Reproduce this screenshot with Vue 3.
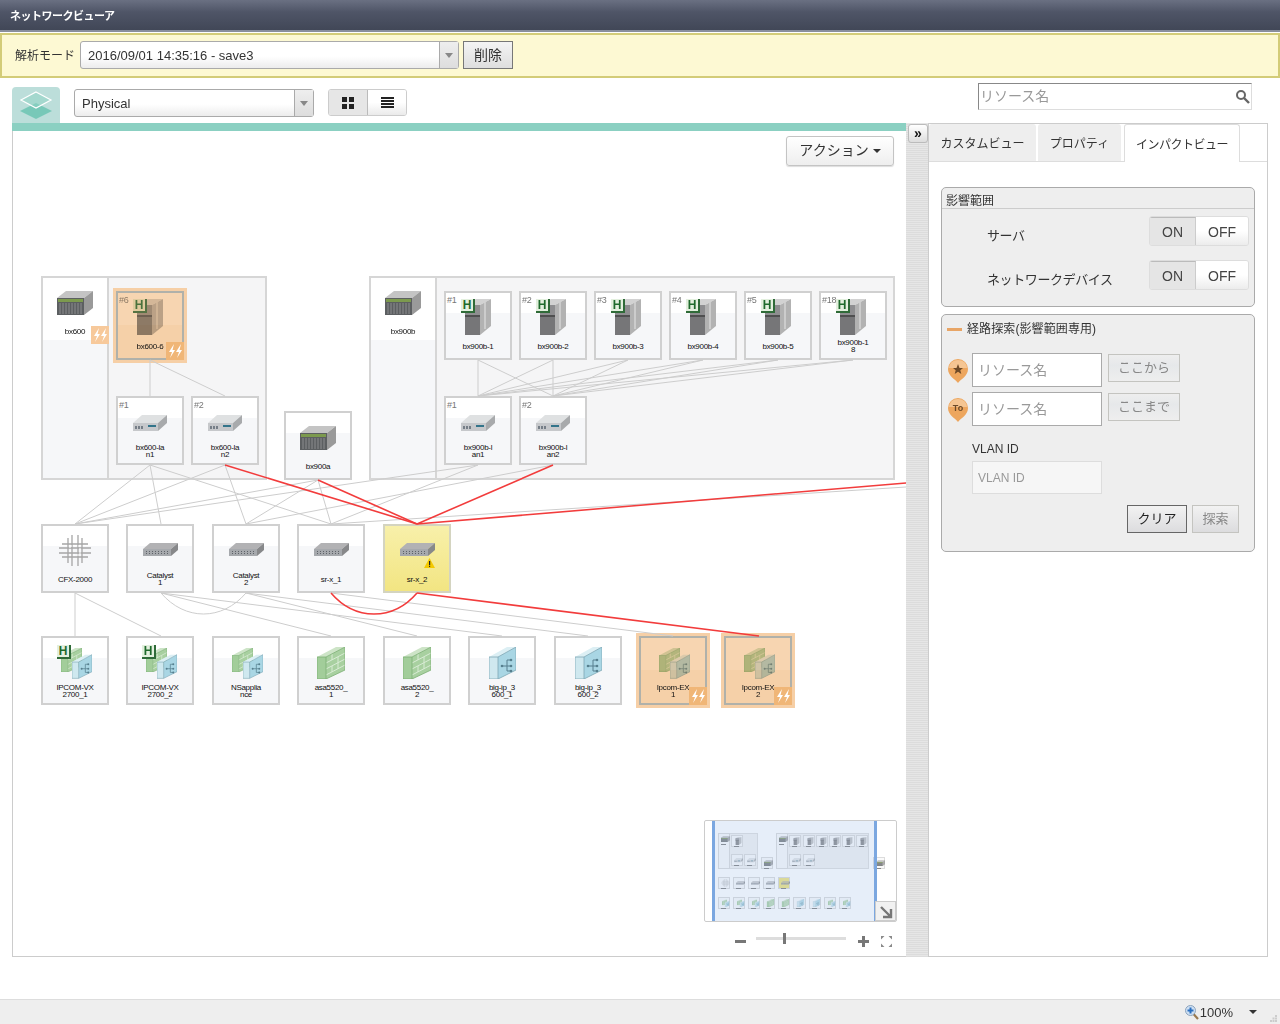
<template>
  <div class="page">
    <svg class="sprite" aria-hidden="true">
      <symbol id="chassis" viewBox="0 0 36 24">
        <polygon points="0,7 9,0 36,0 27,7" fill="#c4c4c4" />
        <polygon points="27,7 36,0 36,17 27,24" fill="#9a9a9a" />
        <rect x="0" y="7" width="27" height="17" fill="#5c5f61" />
        <rect x="1" y="8" width="25" height="3" fill="#7c9a4e" />
        <path d="M3 12v11M6 12v11M9 12v11M12 12v11M15 12v11M18 12v11M21 12v11M24 12v11" stroke="#8b8d8f" stroke-width="1" />
      </symbol>
      <symbol id="tower" viewBox="0 0 26 36">
        <polygon points="0,6 11,0 26,0 15,6" fill="#d2d2d2" />
        <polygon points="15,6 26,0 26,27 15,36" fill="#b2b2b2" />
        <path d="M20 3v27" stroke="#d4d4d4" stroke-width="1.500" />
        <rect x="0" y="6" width="15" height="30" fill="#767678" />
        <rect x="0" y="6" width="15" height="10" fill="#8e8e90" />
        <rect x="0" y="16" width="15" height="2" fill="#4f4f50" />
      </symbol>
      <symbol id="hub" viewBox="0 0 34 17">
        <polygon points="0,9 9,1 34,1 25,9" fill="#dfe1e2" />
        <polygon points="25,9 34,1 34,9 25,17" fill="#a8aaac" />
        <rect x="0" y="9" width="25" height="8" fill="#c6c8cb" />
        <path d="M3 12v3M6 12v3M9 12v3" stroke="#55606b" stroke-width="1.400" />
        <rect x="15" y="11" width="8" height="2" fill="#33748a" />
      </symbol>
      <symbol id="switch" viewBox="0 0 35 13">
        <polygon points="0,6 7,0 35,0 28,6" fill="#b2b2b4" />
        <polygon points="28,6 35,0 35,7 28,13" fill="#87888a" />
        <rect x="0" y="6" width="28" height="7" fill="#a6a9ad" />
        <path d="M3 8.500h22M3 10.500h22" stroke="#5e6268" stroke-width="1" stroke-dasharray="1 2" />
      </symbol>
      <symbol id="fabric" viewBox="0 0 32 31">
        <path d="M9 3v25M13 0v31M19 0v31M23 3v25M3 9h26M0 13h32M0 18h32M3 22h26" stroke="#a6a6a6" stroke-width="1.300" fill="none" />
        <path d="M11 11h10v9h-10z" fill="none" stroke="#fff" stroke-width="1" stroke-dasharray="2 2" />
      </symbol>
      <symbol id="fw" viewBox="0 0 28 32">
        <polygon points="0,10 19,0 28,0 9,10" fill="#cde4c7" />
        <rect x="0" y="10" width="9" height="22" fill="#a2cd9a" />
        <polygon points="9,10 28,0 28,23 9,32" fill="#a8d0a0" />
        <path d="M9 16 28 6M9 22 28 12M9 28 28 18M15 7v6M21 10v6M15 19v6M21 16v6" stroke="#d8ebd4" stroke-width="1" fill="none" />
        <path d="M0 10h9v22h-9zM9 10 28 0v23L9 32" fill="none" stroke="#7bae74" stroke-width=".8" />
      </symbol>
      <symbol id="lb" viewBox="0 0 27 32">
        <polygon points="0,10 18,0 27,0 9,10" fill="#dceff4" />
        <rect x="0" y="10" width="9" height="22" fill="#cfe8ef" />
        <polygon points="9,10 27,0 27,23 9,32" fill="#a9d6e4" />
        <path d="M0 10h9v22h-9zM9 10 27 0v23L9 32" fill="none" stroke="#7ea6b4" stroke-width=".8" />
        <path d="M13 19h5M18 19v-6M18 13h4M18 19h4M18 19v5M18 24h4" stroke="#567f8e" stroke-width="1" fill="none" />
        <circle cx="13" cy="19" r="1.300" fill="#567f8e" />
        <circle cx="22" cy="13" r="1.300" fill="#567f8e" />
        <circle cx="22" cy="19" r="1.300" fill="#567f8e" />
        <circle cx="22" cy="24" r="1.300" fill="#567f8e" />
      </symbol>
      <symbol id="combo" viewBox="0 0 33 33">
        <use href="#fw" x="2" y="2" width="21" height="24" />
        <use href="#lb" x="13" y="8" width="20" height="25" />
      </symbol>
      <symbol id="bolts" viewBox="0 0 18 18">
        <path d="M8 2 3 10h3l-2 6 5-8H6.500zM15 2l-5 8h3l-2 6 5-8h-2.500z" fill="#fff" />
      </symbol>
      <symbol id="warn" viewBox="0 0 11 10">
        <polygon points="5.500,0 11,10 0,10" fill="#f4c900" />
        <rect x="5" y="3" width="1.200" height="4" fill="#222" />
        <rect x="5" y="7.700" width="1.200" height="1.200" fill="#222" />
      </symbol>
    </svg>

    <header class="title-bar">ネットワークビューア</header>

    <div class="mode-bar">
      <span class="mode-label">解析モード</span>
      <div class="select date-select">
        <span class="select-value">2016/09/01 14:35:16 - save3</span>
        <span class="select-arrow"></span>
      </div>
      <button class="delete-button">削除</button>
    </div>

    <div class="tool-row">
      <div class="layer-tab">
        <svg width="34" height="28" viewBox="0 0 34 28">
          <polygon points="17,12 33,20 17,28 1,20" fill="#78c8b8" />
          <polygon points="17,1 32,9 17,17 2,9" fill="#8fd3c5" fill-opacity=".55" stroke="#fff" stroke-width="1.200" />
        </svg>
      </div>
      <div class="select layer-select">
        <span class="select-value">Physical</span>
        <span class="select-arrow"></span>
      </div>
      <div class="view-toggle">
        <button class="view-btn pressed">
          <svg width="12" height="12" viewBox="0 0 12 12"><path d="M0 0h5v5H0zM7 0h5v5H7zM0 7h5v5H0zM7 7h5v5H7z" fill="#222" /></svg>
        </button>
        <button class="view-btn">
          <svg width="13" height="11" viewBox="0 0 13 11"><path d="M0 0h13v2H0zM0 3h13v2H0zM0 6h13v2H0zM0 9h13v2H0z" fill="#222" /></svg>
        </button>
      </div>
      <div class="search-box">
        <span class="search-text">リソース名</span>
        <svg width="15" height="15" viewBox="0 0 15 15">
          <circle cx="6" cy="6" r="4" fill="none" stroke="#666" stroke-width="2" />
          <path d="M9 9l5 5" stroke="#666" stroke-width="2.400" />
        </svg>
      </div>
    </div>

    <div class="main">
      <section class="map-column">
        <div class="teal-bar"></div>
        <div class="canvas">
          <button class="action-button">アクション<span class="caret"></span></button>

          <div v-for="g in groups" :key="g.x" class="group" :style="boxStyle(g)"></div>

          <div
            v-for="n in nodes"
            :key="n.label"
            class="node"
            :class="{ head: n.head, alert: n.alert, warning: n.warning }"
            :style="nodeStyle(n)"
          >
            <span v-if="n.slot" class="slot">{{ n.slot }}</span>
            <div class="art">
              <svg :class="'icon-' + n.icon"><use :href="'#' + n.icon" /></svg>
              <span v-if="n.h" class="h-badge" :class="'h-' + n.icon">H</span>
            </div>
            <div class="label">{{ n.label }}</div>
            <svg v-if="n.warning" class="warn"><use href="#warn" /></svg>
            <span v-if="n.alert || n.flash" class="flash"><svg width="18" height="18"><use href="#bolts" /></svg></span>
          </div>

          <svg class="links" width="894" height="826">
            <g transform="translate(-13 -131)" fill="none">
              <path v-for="(l, i) in greyLinks" :key="i" :d="linePath(l)" stroke="#cdcdcd" />
              <path d="M161 593C185 621 222 621 246 593" stroke="#cdcdcd" />
              <path v-for="(l, i) in redLinks" :key="'r' + i" :d="linePath(l)" stroke="#f23c3c" stroke-width="1.600" />
              <path d="M331 593C355 621 393 621 417 593" stroke="#f23c3c" stroke-width="1.600" />
            </g>
          </svg>

          <div class="minimap">
            <div v-for="g in groups" :key="'m' + g.x" class="mini-group" :style="miniStyle(g.x, g.y, g.w, g.h)"></div>
            <div
              v-for="n in miniNodes"
              :key="'m' + n.label"
              class="mini-node"
              :class="{ warning: n.warning }"
              :style="miniStyle(n.x, n.y, 68, n.head ? 204 : 68)"
            >
              <svg width="9" height="8"><use :href="'#' + n.icon" /></svg>
              <i></i>
            </div>
            <div class="mini-view"></div>
            <div class="mini-resize">
              <svg width="14" height="14" viewBox="0 0 14 14"><path d="M1 1l10 10M11 3v8H3" fill="none" stroke="#777" stroke-width="2.400" /></svg>
            </div>
          </div>

          <div class="zoom-bar">
            <span class="zoom-minus"></span>
            <div class="zoom-track"><span class="zoom-thumb"></span></div>
            <svg width="11" height="11" viewBox="0 0 11 11"><path d="M0 4h11v3H0zM4 0h3v11H4z" fill="#777" /></svg>
            <svg width="11" height="11" viewBox="0 0 11 11"><path d="M0 0h3.500L0 3.500zM11 0v3.500L7.500 0zM0 11V7.500L3.500 11zM11 11H7.500L11 7.500z" fill="#8a8a8a" /></svg>
          </div>
        </div>
      </section>

      <div class="collapser">
        <button class="collapse-btn">»</button>
      </div>

      <aside class="side">
        <nav class="tabs">
          <span class="tab tab-custom">カスタムビュー</span>
          <span class="tab tab-prop">プロパティ</span>
          <span class="tab tab-impact active">インパクトビュー</span>
        </nav>
        <div class="side-body">
          <div class="panel scope-panel">
            <div class="panel-head">影響範囲</div>
            <div v-for="row in scopeRows" :key="row" class="scope-row">
              <span class="scope-name">{{ row }}</span>
              <div class="switch-toggle">
                <span class="on">ON</span>
                <span class="off">OFF</span>
              </div>
            </div>
          </div>

          <div class="panel route-panel">
            <div class="route-title"><i class="dash"></i>経路探索(影響範囲専用)</div>
            <div class="route-row">
              <svg class="pin" width="22" height="26" viewBox="0 0 22 26">
                <path d="M11 25C8 21 1 18 1 11a10 10 0 0 1 20 0c0 7-7 10-10 14z" fill="#eda65e" />
                <path d="M11 2a9 8 0 0 1 9 8H2a9 8 0 0 1 9-8z" fill="#f5c592" />
                <polygon points="11,6 12.500,10 16,10 13.300,12.300 14.300,16 11,13.800 7.700,16 8.700,12.300 6,10 9.500,10" fill="#6d4a28" />
              </svg>
              <div class="field">リソース名</div>
              <button class="route-btn">ここから</button>
            </div>
            <div class="route-row">
              <svg class="pin" width="22" height="26" viewBox="0 0 22 26">
                <path d="M11 25C8 21 1 18 1 11a10 10 0 0 1 20 0c0 7-7 10-10 14z" fill="#eda65e" />
                <path d="M11 2a9 8 0 0 1 9 8H2a9 8 0 0 1 9-8z" fill="#f5c592" />
                <text x="11" y="14" text-anchor="middle" class="pin-text">To</text>
              </svg>
              <div class="field">リソース名</div>
              <button class="route-btn">ここまで</button>
            </div>
            <div class="vlan-label">VLAN ID</div>
            <div class="field vlan-field">VLAN ID</div>
            <div class="route-actions">
              <button class="clear-btn">クリア</button>
              <button class="find-btn">探索</button>
            </div>
          </div>
        </div>
      </aside>
    </div>

    <footer class="status-bar">
      <svg width="14" height="15" viewBox="0 0 14 15">
        <path d="M8.500 9l4.500 5" stroke="#9a7a50" stroke-width="2.200" />
        <circle cx="5.500" cy="5.500" r="5" fill="#cfe0f3" stroke="#8ba3bd" />
        <path d="M2.500 4.500h6v2h-6zM4.500 2.500h2v6h-2z" fill="#2a6fc0" />
      </svg>
      <span class="zoom-value">100%</span>
      <span class="status-caret"></span>
      <svg class="grip" width="7" height="7" viewBox="0 0 7 7"><path d="M5 0h2v2H5zM2.500 2.500h2v2h-2zM5 2.500h2v2H5zM0 5h2v2H0zM2.500 5h2v2h-2zM5 5h2v2H5z" fill="#ccc" /></svg>
    </footer>
  </div>
</template>

<script setup>
const groups = [
  { x: 41, y: 276, w: 226, h: 204 },
  { x: 369, y: 276, w: 526, h: 204 },
]

const nodes = [
  { label: 'bx600', x: 41, y: 276, icon: 'chassis', head: true, flash: true },
  { label: 'bx900b', x: 369, y: 276, icon: 'chassis', head: true },
  { label: 'bx600-6', slot: '#6', x: 116, y: 291, icon: 'tower', h: true, alert: true },
  { label: 'bx900b-1', slot: '#1', x: 444, y: 291, icon: 'tower', h: true },
  { label: 'bx900b-2', slot: '#2', x: 519, y: 291, icon: 'tower', h: true },
  { label: 'bx900b-3', slot: '#3', x: 594, y: 291, icon: 'tower', h: true },
  { label: 'bx900b-4', slot: '#4', x: 669, y: 291, icon: 'tower', h: true },
  { label: 'bx900b-5', slot: '#5', x: 744, y: 291, icon: 'tower', h: true },
  { label: 'bx900b-1\n8', slot: '#18', x: 819, y: 291, icon: 'tower', h: true },
  { label: 'bx600-la\nn1', slot: '#1', x: 116, y: 396, icon: 'hub' },
  { label: 'bx600-la\nn2', slot: '#2', x: 191, y: 396, icon: 'hub' },
  { label: 'bx900b-l\nan1', slot: '#1', x: 444, y: 396, icon: 'hub' },
  { label: 'bx900b-l\nan2', slot: '#2', x: 519, y: 396, icon: 'hub' },
  { label: 'bx900a', x: 284, y: 411, icon: 'chassis' },
  { label: 'CFX-2000', x: 41, y: 524, icon: 'fabric' },
  { label: 'Catalyst\n1', x: 126, y: 524, icon: 'switch' },
  { label: 'Catalyst\n2', x: 212, y: 524, icon: 'switch' },
  { label: 'sr-x_1', x: 297, y: 524, icon: 'switch' },
  { label: 'sr-x_2', x: 383, y: 524, icon: 'switch', warning: true },
  { label: 'IPCOM-VX\n2700_1', x: 41, y: 636, icon: 'combo', h: true },
  { label: 'IPCOM-VX\n2700_2', x: 126, y: 636, icon: 'combo', h: true },
  { label: 'NSapplia\nnce', x: 212, y: 636, icon: 'combo' },
  { label: 'asa5520_\n1', x: 297, y: 636, icon: 'fw' },
  { label: 'asa5520_\n2', x: 383, y: 636, icon: 'fw' },
  { label: 'big-ip_3\n600_1', x: 468, y: 636, icon: 'lb' },
  { label: 'big-ip_3\n600_2', x: 554, y: 636, icon: 'lb' },
  { label: 'Ipcom-EX\n1', x: 639, y: 636, icon: 'combo', alert: true },
  { label: 'Ipcom-EX\n2', x: 724, y: 636, icon: 'combo', alert: true },
]

// the minimap also shows one node that is scrolled off the main canvas
const miniNodes = [...nodes, { label: 'offscreen', x: 916, y: 411, icon: 'chassis' }]

const bladeLinks = [478, 553, 628, 703, 778, 853].flatMap((x) => [
  [x, 360, 478, 396],
  [x, 360, 553, 396],
])

const greyLinks = [
  [150, 360, 150, 396],
  [150, 360, 225, 396],
  ...bladeLinks,
  [150, 465, 75, 524],
  [150, 465, 161, 524],
  [150, 465, 331, 524],
  [225, 465, 75, 524],
  [225, 465, 246, 524],
  [318, 480, 75, 524],
  [318, 480, 246, 524],
  [318, 480, 331, 524],
  [478, 465, 75, 524],
  [478, 465, 331, 524],
  [553, 465, 246, 524],
  [906, 487, 331, 524],
  [75, 593, 75, 636],
  [75, 593, 161, 636],
  [161, 593, 331, 636],
  [161, 593, 502, 636],
  [246, 593, 417, 636],
  [246, 593, 588, 636],
  [331, 593, 673, 636],
]

const redLinks = [
  [225, 465, 417, 524],
  [318, 480, 417, 524],
  [553, 465, 417, 524],
  [906, 483, 417, 524],
  [417, 593, 759, 636],
]

const scopeRows = ['サーバ', 'ネットワークデバイス']

// node data is in page coordinates, the canvas starts at 13,131
const boxStyle = (g) => ({
  left: g.x - 13 + 'px',
  top: g.y - 131 + 'px',
  width: g.w + 'px',
  height: g.h + 'px',
})

const nodeStyle = (n) => ({
  left: n.x - 13 + 'px',
  top: n.y - 131 + 'px',
})

const linePath = (l) => `M${l[0]} ${l[1]}L${l[2]} ${l[3]}`

const miniStyle = (x, y, w, h) => ({
  left: 5.4 + x * 0.1775 + 'px',
  top: -37.3 + y * 0.1775 + 'px',
  width: w * 0.1775 + 'px',
  height: h * 0.1775 + 'px',
})
</script>

<style scoped>
.page {
  width: 1280px;
  height: 1024px;
  display: flex;
  flex-direction: column;
  overflow: hidden;
  background: #fff;
  color: #333;
  font-family: "Liberation Sans", "Noto Sans CJK JP", sans-serif;
}
.sprite {
  position: absolute;
  width: 0;
  height: 0;
}
button {
  font-family: inherit;
  padding: 0;
  cursor: pointer;
}

.title-bar {
  height: 32px;
  flex: none;
  box-sizing: border-box;
  padding: 9px 0 0 10px;
  background: linear-gradient(#6a7082, #4f5567 40%, #414757);
  border-bottom: 2px solid #8a8f9c;
  color: #fff;
  font-size: 11px;
  font-weight: bold;
  letter-spacing: -0.5px;
  line-height: 15px;
}

.mode-bar {
  height: 45px;
  flex: none;
  margin-top: 1px;
  box-sizing: border-box;
  display: flex;
  align-items: center;
  padding: 0 0 2px 13px;
  background: #fdf9d3;
  border: 2px solid #d3cc78;
}
.mode-label {
  width: 65px;
  font-size: 12px;
}
.select {
  display: flex;
  box-sizing: border-box;
  height: 28px;
  background: linear-gradient(#fff 55%, #ececec);
  border: 1px solid #aaa;
  border-radius: 3px;
  font-size: 13px;
  color: #333;
}
.select-value {
  flex: 1;
  padding-left: 7px;
  line-height: 28px;
}
.select-arrow {
  width: 18px;
  border-left: 1px solid #aaa;
  position: relative;
  background: linear-gradient(#eee, #ddd);
}
.select-arrow::after {
  content: "";
  position: absolute;
  left: 5px;
  top: 11px;
  border: 4px solid transparent;
  border-top: 5px solid #888;
}
.date-select {
  width: 379px;
}
.delete-button {
  width: 50px;
  height: 28px;
  margin-left: 4px;
  padding-bottom: 2px;
  font-size: 14px;
  color: #333;
  background: linear-gradient(#f4f4f4, #dedede);
  border: 1px solid #777;
}

.tool-row {
  height: 45px;
  flex: none;
  position: relative;
  display: flex;
  align-items: flex-start;
}
.layer-tab {
  width: 48px;
  height: 36px;
  margin: 9px 0 0 12px;
  box-sizing: border-box;
  padding: 4px 0 0 7px;
  background: #bcdeda;
  border-radius: 4px 4px 0 0;
}
.layer-select {
  width: 240px;
  margin: 11px 0 0 14px;
}
.view-toggle {
  display: flex;
  margin: 11px 0 0 14px;
  width: 79px;
  height: 27px;
  border: 1px solid #ccc;
  border-radius: 3px;
  box-sizing: border-box;
  overflow: hidden;
}
.view-btn {
  flex: 1;
  border: 0;
  background: linear-gradient(#fff 50%, #eaeaea);
  display: flex;
  align-items: center;
  justify-content: center;
}
.view-btn.pressed {
  background: #e6e6e6;
  border-right: 1px solid #bbb;
}
.search-box {
  margin: 5px 0 0 571px;
  width: 274px;
  height: 27px;
  box-sizing: border-box;
  display: flex;
  align-items: center;
  justify-content: space-between;
  padding: 0 1px 0 2px;
  border: 1px solid #ddd;
  border-top: 1px solid #888;
  border-left: 1px solid #888;
  font-size: 14px;
  color: #999;
}
.search-text {
  margin: -3px 0 0 -1px;
}

.main {
  height: 834px;
  flex: none;
  display: flex;
  margin: 0 12px;
}
.map-column {
  width: 894px;
  display: flex;
  flex-direction: column;
}
.teal-bar {
  height: 8px;
  background: #8bd0c2;
}
.canvas {
  flex: 1;
  position: relative;
  overflow: hidden;
  border-left: 1px solid #ccc;
  border-bottom: 1px solid #ccc;
}
.action-button {
  position: absolute;
  left: 773px;
  top: 5px;
  width: 108px;
  height: 30px;
  padding-bottom: 4px;
  font-size: 14px;
  color: #333;
  background: linear-gradient(#fff, #eee);
  border: 1px solid #c4c4c4;
  border-radius: 3px;
  box-shadow: 0 1px 1px #ddd;
}
.caret {
  display: inline-block;
  margin-left: 4px;
  vertical-align: 2px;
  border: 4px solid transparent;
  border-top: 4px solid #333;
  border-bottom: 0;
}

.group {
  position: absolute;
  box-sizing: border-box;
  background: #f5f5f6;
  border: 2px solid #d6d6d6;
}
.links {
  position: absolute;
  left: 0;
  top: 0;
  pointer-events: none;
}
.node {
  position: absolute;
  width: 68px;
  height: 69px;
  box-sizing: border-box;
  display: flex;
  flex-direction: column;
  background: linear-gradient(#fff 20px, #f6f7f9 20px);
  border: 2px solid #d0d0d0;
}
.node.head {
  height: 204px;
  background: linear-gradient(#fff 62px, #f6f7f9 62px);
  border-color: #d6d6d6;
}
.node.alert {
  background: linear-gradient(#f7d5b1 32px, #f5d0a8 32px);
  border-color: #b0b1aa;
  box-shadow: 0 0 0 3px #f6cfa6;
}
.node.warning {
  background: linear-gradient(#f8f0aa, #f2e582);
  border-color: #d4d4c0;
}
.slot {
  position: absolute;
  left: 1px;
  top: 0;
  font-size: 9px;
  line-height: 14px;
  color: #777;
  letter-spacing: -0.3px;
}
.art {
  position: relative;
  height: 46px;
  flex: none;
  display: flex;
  justify-content: center;
}
.alert .art,
.alert .slot {
  opacity: 0.8;
  mix-blend-mode: multiply;
}
.icon-chassis {
  width: 36px;
  height: 24px;
  margin-top: 13px;
}
.icon-tower {
  width: 26px;
  height: 36px;
  margin-top: 6px;
}
.icon-hub {
  width: 34px;
  height: 17px;
  margin-top: 16px;
}
.icon-switch {
  width: 35px;
  height: 13px;
  margin-top: 17px;
}
.icon-fabric {
  width: 32px;
  height: 31px;
  margin-top: 9px;
}
.icon-combo {
  width: 33px;
  height: 33px;
  margin-top: 8px;
}
.icon-fw {
  width: 28px;
  height: 32px;
  margin-top: 9px;
}
.icon-lb {
  width: 27px;
  height: 32px;
  margin-top: 9px;
}
.h-badge {
  position: absolute;
  width: 14px;
  height: 14px;
  box-sizing: border-box;
  background: #e3f0de;
  border-right: 2px solid #2f6b38;
  border-bottom: 2px solid #2f6b38;
  color: #1f6a2c;
  font-size: 12px;
  font-weight: bold;
  line-height: 12px;
  text-align: center;
}
.h-tower {
  left: 15px;
  top: 6px;
}
.h-combo {
  left: 14px;
  top: 7px;
}
.label {
  height: 14px;
  flex: none;
  display: flex;
  align-items: center;
  justify-content: center;
  text-align: center;
  white-space: pre-line;
  font-size: 8px;
  line-height: 7px;
  letter-spacing: -0.3px;
  color: #111;
}
.warn {
  position: absolute;
  left: 39px;
  top: 32px;
  width: 11px;
  height: 10px;
}
.flash {
  position: absolute;
  right: -2px;
  bottom: -2px;
  width: 18px;
  height: 18px;
  background: #f0b677;
}
.head .flash {
  top: 48px;
  bottom: auto;
  background: #f7c99b;
}
.flash svg {
  display: block;
}

.minimap {
  position: absolute;
  left: 691px;
  top: 689px;
  width: 193px;
  height: 102px;
  box-sizing: border-box;
  background: #fff;
  border: 1px solid #ccc;
  border-radius: 2px;
  overflow: hidden;
}
.mini-group {
  position: absolute;
  box-sizing: border-box;
  background: #f3f3f3;
  border: 1px solid #e0e0e0;
}
.mini-node {
  position: absolute;
  box-sizing: border-box;
  padding: 1px 0 0 2px;
  background: #fafafa;
  border: 1px solid #dcdcdc;
}
.mini-node svg {
  display: block;
  opacity: 0.8;
}
.mini-node i {
  display: block;
  width: 5px;
  height: 1px;
  margin-top: 1px;
  background: #888;
}
.mini-node.warning {
  background: #f1e588;
}
.mini-view {
  position: absolute;
  left: 7px;
  top: 0;
  width: 165px;
  height: 100%;
  box-sizing: border-box;
  background: rgba(130, 170, 225, 0.2);
  border-left: 3px solid #7ba7e0;
  border-right: 3px solid #7ba7e0;
}
.mini-resize {
  position: absolute;
  right: 0;
  bottom: 0;
  width: 21px;
  height: 20px;
  box-sizing: border-box;
  padding: 4px 0 0 4px;
  background: #f1f1f1;
  border: 1px solid #ccc;
}

.zoom-bar {
  position: absolute;
  left: 722px;
  top: 805px;
  width: 157px;
  height: 11px;
  display: flex;
  align-items: center;
}
.zoom-minus {
  width: 11px;
  height: 3px;
  background: #777;
}
.zoom-track {
  position: relative;
  width: 90px;
  height: 3px;
  margin: -6px 12px 0 10px;
  background: #ddd;
}
.zoom-thumb {
  position: absolute;
  left: 27px;
  top: -4px;
  width: 3px;
  height: 11px;
  background: #777;
}
.zoom-bar svg + svg {
  margin-left: 12px;
}

.collapser {
  width: 22px;
  flex: none;
  box-sizing: border-box;
  padding: 1px 0 0 2px;
  background: repeating-linear-gradient(#e6e6e6 0 1px, #dcdcdc 1px 2px);
}
.collapse-btn {
  display: block;
  width: 20px;
  height: 19px;
  background: linear-gradient(#fff, #ddd);
  border: 1px solid #bbb;
  border-radius: 3px;
  color: #111;
  font-size: 14px;
  font-weight: bold;
  line-height: 13px;
}

.side {
  width: 340px;
  flex: none;
  box-sizing: border-box;
  border: 1px solid #ccc;
}
.tabs {
  height: 37px;
  display: flex;
  gap: 2px;
  border-bottom: 1px solid #ddd;
}
.tab {
  box-sizing: border-box;
  height: 37px;
  line-height: 40px;
  font-size: 12px;
  text-align: center;
  color: #333;
  background: #eee;
  border-radius: 3px 3px 0 0;
}
.tab-custom {
  width: 107px;
}
.tab-prop {
  width: 83px;
}
.tab-impact {
  width: 116px;
  margin-left: 1px;
  letter-spacing: -0.5px;
}
.tab.active {
  height: 38px;
  background: #fff;
  border: 1px solid #ddd;
  border-bottom: 0;
}
.side-body {
  padding: 25px 12px 0;
}
.panel {
  background: #eee;
  border: 1px solid #aaa;
  border-radius: 5px;
  box-sizing: border-box;
}
.scope-panel {
  height: 120px;
}
.panel-head {
  height: 21px;
  box-sizing: border-box;
  padding: 5px 0 0 4px;
  font-size: 12px;
  line-height: 16px;
  border-bottom: 1px solid #ccc;
  margin-bottom: 7px;
}
.scope-row {
  display: flex;
  align-items: center;
  justify-content: space-between;
  height: 30px;
  margin-bottom: 14px;
  padding: 0 5px 0 45px;
  font-size: 13px;
}
.scope-name {
  padding-top: 6px;
  letter-spacing: -0.4px;
}
.switch-toggle {
  display: flex;
  height: 30px;
  box-sizing: border-box;
  border: 1px solid #ddd;
  border-radius: 3px;
  overflow: hidden;
  font-size: 14px;
  line-height: 30px;
  color: #444;
  text-align: center;
}
.on {
  width: 46px;
  box-sizing: border-box;
  background: #e5e5e5;
  border-top: 1px solid #bbb;
  border-right: 1px solid #ccc;
  line-height: 28px;
}
.off {
  width: 52px;
  background: linear-gradient(#fff 50%, #ececec);
}

.route-panel {
  height: 238px;
  margin-top: 7px;
  padding-left: 5px;
}
.route-title {
  height: 38px;
  display: flex;
  align-items: flex-start;
  padding-top: 6px;
  box-sizing: border-box;
  font-size: 12px;
  line-height: 17px;
  letter-spacing: 0.1px;
}
.dash {
  width: 15px;
  height: 3px;
  margin: 7px 5px 0 0;
  background: #e8a566;
}
.route-row {
  height: 34px;
  margin-bottom: 5px;
  display: flex;
  align-items: flex-start;
}
.pin {
  margin: 5px 3px 0 0;
  flex: none;
}
.pin-text {
  font-size: 9px;
  font-weight: bold;
  fill: #6d4a28;
}
.field {
  box-sizing: border-box;
  width: 130px;
  height: 34px;
  padding-left: 5px;
  line-height: 32px;
  font-size: 14px;
  color: #999;
  background: #fff;
  border: 1px solid #aaa;
}
.route-btn {
  width: 72px;
  height: 28px;
  margin: 1px 0 0 6px;
  padding-bottom: 3px;
  font-size: 13px;
  color: #888;
  background: linear-gradient(#eee, #e6e8ea 40%, #eee);
  border: 1px solid #c4c4c0;
}
.vlan-label {
  margin: 15px 0 0 25px;
  height: 20px;
  font-size: 12px;
  line-height: 16px;
}
.vlan-field {
  margin-left: 25px;
  height: 33px;
  font-size: 12px;
  background: #f6f6f6;
  border-color: #ddd;
}
.route-actions {
  display: flex;
  justify-content: flex-end;
  gap: 5px;
  margin: 11px 15px 0 0;
}
.clear-btn,
.find-btn {
  height: 28px;
  padding-bottom: 3px;
  font-size: 13px;
  background: linear-gradient(#f2f2f2, #dcdcde);
}
.clear-btn {
  width: 60px;
  color: #222;
  border: 1px solid #666;
}
.find-btn {
  width: 47px;
  color: #888;
  border: 1px solid #c4c4c0;
}

.status-bar {
  margin-top: auto;
  height: 25px;
  flex: none;
  box-sizing: border-box;
  display: flex;
  align-items: center;
  justify-content: flex-end;
  padding-right: 3px;
  background: #eee;
  border-top: 1px solid #ddd;
}
.zoom-value {
  margin: 0 16px 0 1px;
  font-size: 13px;
  color: #333;
}
.status-caret {
  border: 4px solid transparent;
  border-top: 4px solid #333;
  border-bottom: 0;
  margin-right: 13px;
}
.grip {
  align-self: flex-end;
  margin-bottom: 2px;
}
</style>

<style>
body {
  margin: 0;
}
</style>
